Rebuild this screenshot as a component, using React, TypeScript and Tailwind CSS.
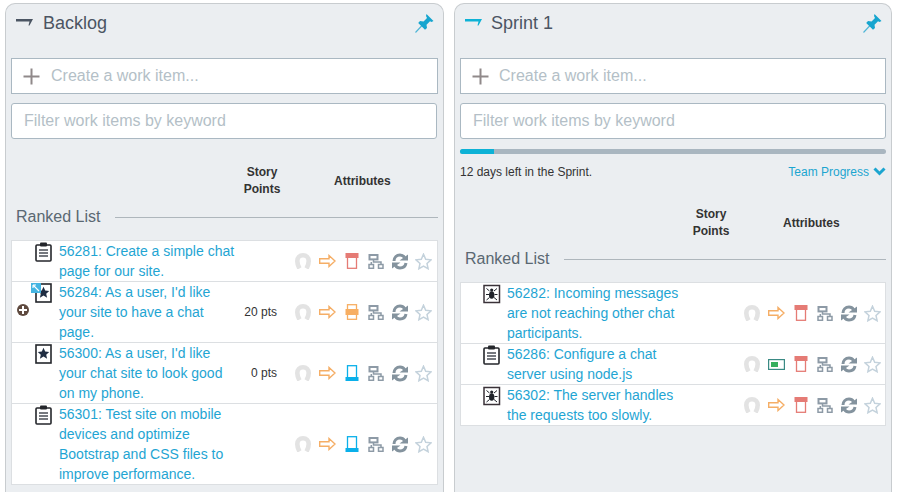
import React from "react";

const Clipboard = () => (
  <svg width="18" height="20" viewBox="0 0 18 20" fill="none">
    <rect x="1" y="3" width="15" height="16" rx="1" stroke="#24262b" strokeWidth="1.6" fill="#fff" />
    <rect x="5" y="0.5" width="7" height="4" rx="1" fill="#24262b" />
    <path d="M4 8h9M4 11h9M4 14h9" stroke="#4a4d55" strokeWidth="1.4" />
  </svg>
);
const StarBox = () => (
  <svg width="18" height="20" viewBox="0 0 18 20" fill="none">
    <rect x="1" y="1" width="15" height="18" stroke="#24262b" strokeWidth="1.6" fill="#fff" />
    <path d="M8.5 3.8l1.7 3.7 4 .5-3 2.7.9 4-3.6-2.1-3.6 2.1.9-4-3-2.700 4-.5z" fill="#1f2d42" />
  </svg>
);
const Bug = () => (
  <svg width="18" height="20" viewBox="0 0 18 20" fill="none">
    <rect x="1" y="1.5" width="15.5" height="17" stroke="#3a3238" strokeWidth="1.5" fill="#fff" />
    <ellipse cx="8.7" cy="11" rx="2.700" ry="3.800" fill="#1f2229" />
    <circle cx="8.7" cy="6" r="1.6" fill="#1f2229" />
    <path d="M3.5 4.5l3 2.5M14 4.5l-3 2.500M3 10.5h3M14.5 10.5h-3M3.5 16l3-2.500M14 16l-3-2.500" stroke="#1f2229" strokeWidth="1" />
  </svg>
);
const Head = () => (
  <svg width="16" height="16" viewBox="0 0 16 16" fill="none">
    <path d="M4.500 15.500C2.800 12.500 2.300 10.200 2.300 8c0-3.500 2.300-5.700 5.700-5.700s5.700 2.200 5.700 5.700c0 2.200-.5 4.500-2.200 7.500" stroke="#e3e3e3" strokeWidth="4.600" />
  </svg>
);
const Arrow = () => (
  <svg width="17" height="14" viewBox="0 0 17 14" fill="none">
    <path d="M.7 4.800h9.300V1.500L16 7l-6 5.500V9.200H.7z" stroke="#f5ae66" strokeWidth="1.400" fill="#fff" />
  </svg>
);
const Type = ({ color, pos }: { color: string; pos: "top" | "mid" | "bottom" }) => (
  <svg width="14" height="16" viewBox="0 0 14 16" fill="none">
    <rect x="2.500" y="0.700" width="9" height="14.600" stroke={color} strokeWidth="1.300" fill="#fff" />
    {pos === "top" && <rect x="0.500" y="0" width="13" height="5" fill={color} />}
    {pos === "mid" && <rect x="0.500" y="5" width="13" height="6" fill={color} />}
    {pos === "bottom" && <rect x="0.500" y="12" width="13" height="4" fill={color} />}
  </svg>
);
const Tree = () => (
  <svg width="16" height="15" viewBox="0 0 16 15" fill="none" stroke="#8d9aa6" strokeWidth="1.500">
    <rect x="1.500" y="1" width="8" height="4.400" strokeWidth="2" />
    <rect x="1" y="10.500" width="4.500" height="3.800" />
    <rect x="10.500" y="10.500" width="4.500" height="3.800" />
    <path d="M5.500 5v3h7.500v2.500M3.300 8v2.500" />
  </svg>
);
const Sync = () => (
  <svg width="16" height="17" viewBox="0 0 16 17" fill="none">
    <path d="M2 8C2 4.500 4.500 2 8 2c2 0 3.500.8 4.500 2.500" stroke="#84939e" strokeWidth="3" />
    <path d="M7.500 7.500h8.500V1.500z" fill="#84939e" />
    <path d="M14 10c-.5 3-3 5-6 5-2 0-3.500-.8-4.500-2.500" stroke="#84939e" strokeWidth="3" />
    <path d="M8.500 9.500H0v6z" fill="#84939e" />
  </svg>
);
const Star = () => (
  <svg width="17" height="17" viewBox="0 0 17 17" fill="none">
    <path d="M8.500 1.200l2.200 5 5.300.6-4 3.600 1.100 5.300-4.600-2.700-4.600 2.700 1.100-5.300-4-3.600 5.300-.6z" stroke="#c4d2dc" strokeWidth="1.500" fill="#fff" />
  </svg>
);
const Pin = () => (
  <svg width="19" height="19" viewBox="0 0 19 19" fill="none">
    <path d="M0.500 18.500L7.500 11" stroke="#4db5d6" strokeWidth="1.100" />
    <path d="M11.500 0L18.500 7L16.500 8L15 7.200L11.500 10.700L12 14L10 15.800L3.200 9L5 7L8.500 7.500L12 4L11 2z" fill="#16a5cf" />
  </svg>
);
const Caret = ({ color }: { color: string }) => (
  <svg width="17" height="7" viewBox="0 0 17 7" fill="none" className="block">
    <path d="M0 0H17L13.500 6.500H12.500L13.500 2.500H0z" fill={color} />
  </svg>
);
const Chevron = () => (
  <svg width="13" height="9" viewBox="0 0 13 9" fill="none">
    <path d="M1.500 1.500l5 5 5-5" stroke="#1ba5d0" strokeWidth="3" />
  </svg>
);
const Battery = () => (
  <svg width="17" height="11" viewBox="0 0 17 11" fill="none">
    <rect x="0.600" y="0.600" width="15.800" height="9.800" stroke="#3a8a84" strokeWidth="1.200" fill="#fff" />
    <rect x="3" y="3" width="7" height="5" fill="#35ae5d" />
  </svg>
);

type RowData = {
  icon: React.ReactNode;
  text: string[];
  pts?: string;
  second?: React.ReactNode;
  type: React.ReactNode;
  badge?: boolean;
};

const red = <Type color="#e57b75" pos="top" />;
const Row = ({ r, last, sprint }: { r: RowData; last: boolean; sprint?: boolean }) => (
  <div className={`relative flex items-center bg-white ${last ? "" : "border-b border-[#dcdfe2]"}`}>
    {r.badge && (
      <>
        <span className="absolute left-[5px] top-[22px] flex h-[12px] w-[12px] items-center justify-center rounded-full bg-[#5f4a3f]">
          <span className="relative block h-[8px] w-[8px]">
            <span className="absolute left-0 top-[3px] h-[2px] w-[8px] bg-white" />
            <span className="absolute left-[3px] top-0 h-[8px] w-[2px] bg-white" />
          </span>
        </span>
        <span className="absolute left-[19px] top-[1px] z-10 h-[10px] w-[10px] bg-[#45b5e2]">
          <svg width="10" height="10" viewBox="0 0 10 10" fill="none" className="block">
            <path d="M2 2l6 6M2 2h3M2 2v3" stroke="#fff" strokeWidth="1.100" />
          </svg>
        </span>
      </>
    )}
    <div className={`flex shrink-0 self-start pt-[1px] ${sprint ? "w-[46px] pl-[22px]" : "w-[47px] pl-[23px]"}`}>{r.icon}</div>
    <div className={`shrink-0 text-[14px] leading-[20px] text-[#1fa5d3] ${sprint ? "w-[182px]" : "w-[181px]"}`}>
      {r.text.map((t) => (
        <div key={t} className="whitespace-nowrap">{t}</div>
      ))}
    </div>
    <div className="w-[37px] shrink-0 whitespace-nowrap text-right text-[12px] text-[#333]">
      {r.pts ?? ""}
    </div>
    <div className="ml-[18px] flex w-[16px] shrink-0 justify-start"><Head /></div>
    <div className="ml-[8px] flex w-[17px] shrink-0 items-center justify-center">{r.second ?? <Arrow />}</div>
    <div className="ml-[9px] flex w-[14px] shrink-0">{r.type}</div>
    <div className="ml-[9px] flex w-[16px] shrink-0"><Tree /></div>
    <div className="ml-[8px] flex w-[16px] shrink-0"><Sync /></div>
    <div className="ml-[7px] flex w-[17px] shrink-0"><Star /></div>
  </div>
);

const Panel = ({
  title,
  caret,
  rows,
  sprint,
  width,
}: {
  title: string;
  caret: string;
  rows: RowData[];
  sprint?: boolean;
  width: string;
}) => (
  <div className={`${width} shrink-0 rounded-t-[10px] border border-b-0 border-[#c8cccf] bg-[#ebeef1] px-[5px]`}>
    <div className="flex h-[40px] items-center justify-between pb-[2px] pl-[5px] pr-[4px]">
      <div className={`flex items-center text-[18px] text-[#4b5563] ${sprint ? "gap-[9px]" : "gap-[10px]"}`}>
        <span className="mb-[1px]"><Caret color={caret} /></span>
        <span>{title}</span>
      </div>
      <Pin />
    </div>
    <div className={`mt-[14px] flex h-[36px] items-center border border-[#aab8c2] bg-white pl-[11px] ${sprint ? "gap-[10px]" : "gap-[11px]"}`}>
      <svg width="17" height="17" viewBox="0 0 17 17" fill="none">
        <path d="M8.500 0.500v16M0.500 8.500h16" stroke="#90898a" strokeWidth="2" />
      </svg>
      <span className="text-[16px] text-[#b4bfc7]">Create a work item...</span>
    </div>
    <div className={`mt-[9px] flex h-[36px] items-center rounded-[3px] border border-[#aab8c2] bg-white pl-[12px] text-[16px] text-[#b4bfc7] ${sprint ? "" : "mr-[1px]"}`}>
      Filter work items by keyword
    </div>
    {sprint && (
      <>
        <div className="mt-[10px] h-[5px] rounded-full bg-[#a9b6c0]">
          <div className="h-[5px] w-[34px] rounded-l-full bg-[#0db2d6]" />
        </div>
        <div className="mt-[9px] flex h-[17px] items-center justify-between text-[12px]">
          <span className="text-[#333]">12 days left in the Sprint.</span>
          <span className="flex items-center gap-[4px] text-[#1ba5d0]">
            Team Progress <Chevron />
          </span>
        </div>
      </>
    )}
    <div className={`${sprint ? "mt-[26px]" : "mt-[25px]"} flex h-[34px] items-center text-center text-[12px] font-bold leading-[17px] text-[#333]`}>
      <div className="ml-[227px] w-[48px]">Story Points</div>
      <div className="ml-[48px]">Attributes</div>
    </div>
    <div className="mt-[7px] flex h-[24px] items-center gap-[14px] pl-[5px]">
      <span className="text-[16px] text-[#5a6872]">Ranked List</span>
      <span className="h-px flex-1 bg-[#aeb6bc]" />
    </div>
    <div className="mt-[11px] border border-[#dcdfe2] bg-white">
      {rows.map((r, i) => (
        <Row key={r.text[0]} r={r} last={i === rows.length - 1} sprint={sprint} />
      ))}
    </div>
  </div>
);

const blue = <Type color="#0ab0ea" pos="bottom" />;

const backlog: RowData[] = [
  { icon: <Clipboard />, text: ["56281: Create a simple chat", "page for our site."], type: red },
  { icon: <StarBox />, text: ["56284: As a user, I'd like", "your site to have a chat", "page."], pts: "20 pts", type: <Type color="#f7ae62" pos="mid" />, badge: true },
  { icon: <StarBox />, text: ["56300: As a user, I'd like", "your chat site to look good", "on my phone."], pts: "0 pts", type: blue },
  { icon: <Clipboard />, text: ["56301: Test site on mobile", "devices and optimize", "Bootstrap and CSS files to", "improve performance."], type: blue },
];
const sprint: RowData[] = [
  { icon: <Bug />, text: ["56282: Incoming messages", "are not reaching other chat", "participants."], type: red },
  { icon: <Clipboard />, text: ["56286: Configure a chat", "server using node.js"], second: <Battery />, type: red },
  { icon: <Bug />, text: ["56302: The server handles", "the requests too slowly."], type: red },
];

export default function App() {
  return (
    <div className="flex h-[492px] w-[900px] gap-[10px] overflow-hidden bg-white pl-[5px] pt-[3px] font-['Liberation_Sans',Arial,sans-serif]">
      <Panel title="Backlog" caret="#4b5563" rows={backlog} width="w-[439px]" />
      <Panel title="Sprint 1" caret="#0db2d6" rows={sprint} sprint width="w-[438px]" />
    </div>
  );
}
